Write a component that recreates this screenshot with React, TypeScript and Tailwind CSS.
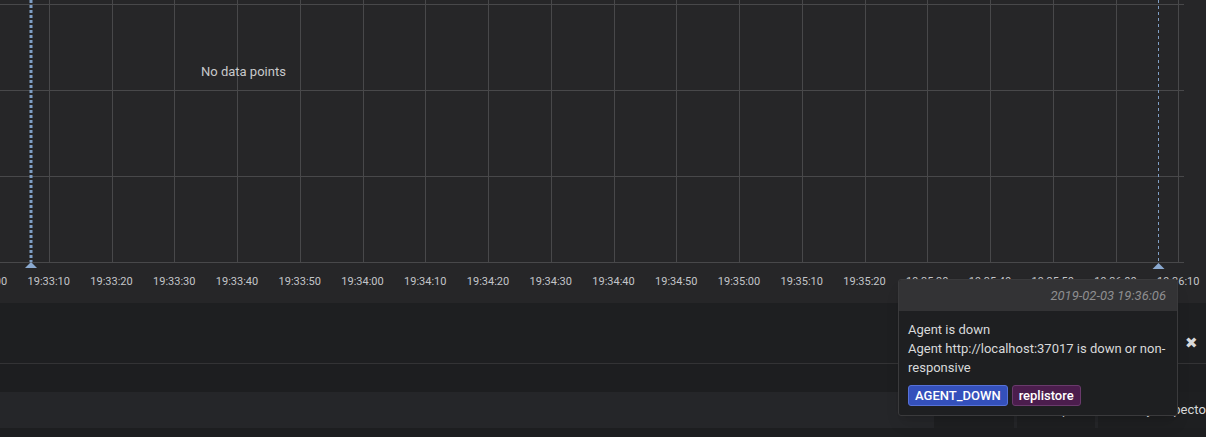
import React from "react";

const ticks = Array.from({ length: 20 }, (_, i) => {
  const total = 33 * 60 + i * 10;
  const m = Math.floor(total / 60);
  const s = total % 60;
  return { x: -14 + i * 62.75, label: `19:${m}:${String(s).padStart(2, "0")}` };
});

function Chart() {
  return (
    <div className="relative h-[303px] bg-[#262628]">
      <svg width="1206" height="303" className="block">
        {[4.5, 90.5, 176.5, 262.5].map((y) => (
          <line key={y} x1="0" x2="1184" y1={y} y2={y} stroke="#48484a" strokeWidth="1" />
        ))}
        {ticks.slice(1).map((t) => (
          <line key={t.label} x1={Math.round(t.x) + 0.5} x2={Math.round(t.x) + 0.5} y1="0" y2="262" stroke="#48484a" strokeWidth="1" />
        ))}
        {ticks.map((t) => (
          <text
            key={"l" + t.label}
            x={t.x}
            y="285"
            textAnchor="middle"
            fill="#c3c5c8"
            fontSize="11"
            fontFamily="Roboto, sans-serif"
          >
            {t.label}
          </text>
        ))}
        {/* annotation markers */}
        <line x1="31" x2="31" y1="0" y2="262" stroke="#7f9ec4" strokeWidth="3" strokeDasharray="3 2" />
        <path d="M31 262 L37 268 L25 268 Z" fill="#8aa9d0" />
        <line x1="1158.5" x2="1158.5" y1="0" y2="262" stroke="#7f9ec4" strokeWidth="1" strokeDasharray="3 3" />
        <path d="M1158.5 263 L1164.5 269 L1152.5 269 Z" fill="#8aa9d0" />
      </svg>
      <div className="absolute left-[201px] top-[62px] text-[13px] text-[#c8c9cb] font-['Roboto',sans-serif]">
        No data points
      </div>
    </div>
  );
}

function Tooltip() {
  return (
    <div className="absolute left-[898px] top-[279px] w-[280px] overflow-hidden rounded-[3px] border border-[#3a3a3c] bg-[#1e1f21] shadow-lg font-['Roboto',sans-serif]">
      <div className="flex h-[31px] items-center justify-end bg-[#333335] px-[11px] text-[13px] italic text-[#8e8e90]">
        2019-02-03 19:36:06
      </div>
      <div className="px-[9px] pt-[9px] pb-[9px] text-[13px] leading-[19px] text-[#d8d9da]">
        <div>Agent is down</div>
        <div>Agent http://localhost:37017 is down or non-responsive</div>
        <div className="mt-[8px] flex gap-[4px]">
          <span className="rounded-[3px] border border-[#5671d8] bg-[#3450bb] px-[6px] text-[13px] font-medium leading-[19px] text-white">
            AGENT_DOWN
          </span>
          <span className="rounded-[3px] border border-[#6a3a6c] bg-[#4b1d4d] px-[6px] text-[13px] font-medium leading-[19px] text-white">
            replistore
          </span>
        </div>
      </div>
    </div>
  );
}

export default function App() {
  return (
    <div className="relative h-[437px] w-[1206px] overflow-hidden bg-[#1d1e20] font-['Roboto',sans-serif]">
      <Chart />
      <div className="flex h-[60px] items-center justify-end bg-[#1e1f21] pr-[8px] pt-[20px]">
        <span className="text-[15px] text-[#d8d9da]">✖</span>
      </div>
      <div className="h-[29px] border-t border-[#333335] bg-[#1d1e20]" />
      <div className="flex h-[36px] items-stretch justify-end gap-[3px] bg-[#252629]">
        <div className="w-[80px] bg-[#1e1f21]" />
        <div className="flex w-[78px] items-center justify-center bg-[#1e1f21] text-[13px] text-[#d8d9da]">
          Help
        </div>
        <div className="flex w-[108px] items-center whitespace-nowrap bg-[#1e1f21] pl-[21px] text-[13px] text-[#d8d9da]">
          Query Inspector
        </div>
      </div>
      <Tooltip />
    </div>
  );
}
